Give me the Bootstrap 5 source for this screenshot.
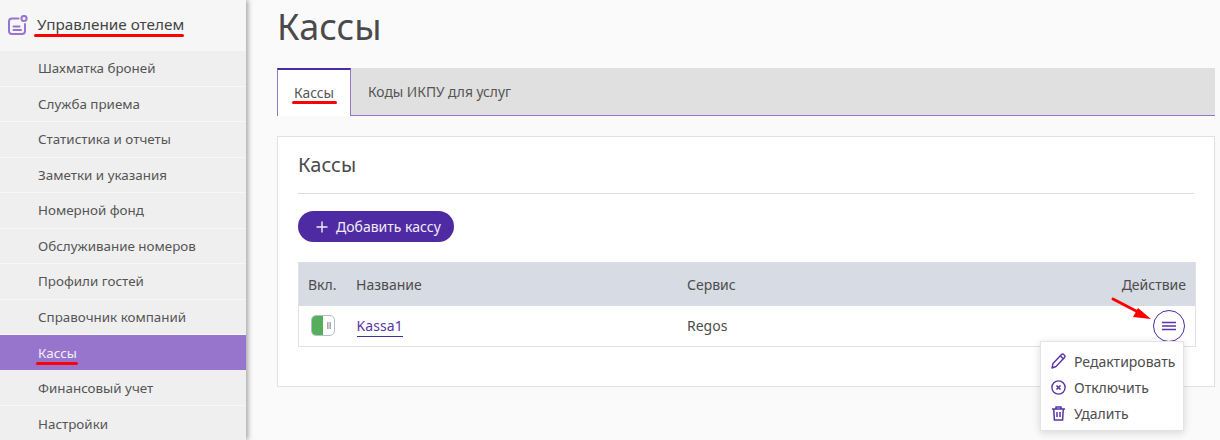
<!DOCTYPE html>
<html lang="ru"><head><meta charset="utf-8"><title>Кассы</title>
<link href="https://cdn.jsdelivr.net/npm/bootstrap@5.3.0/dist/css/bootstrap.min.css" rel="stylesheet">
<style>
html,body{height:440px;overflow:hidden}
body{font-family:"Noto Sans",sans-serif;background:#fafafa;color:#4d4d4d;font-size:14px}
.shell{height:440px;position:relative}
.side{width:246px;flex:none;height:440px;background:#efefef;box-shadow:2px 0 5px rgba(0,0,0,.35);position:relative;z-index:2}
.side-head{height:51px;background:#f6f6f6;padding:0 0 2px 8px;gap:9px;font-size:15.3px;color:#444}
.side-link{display:flex;align-items:center;height:35.5px;padding-left:38px;font-size:13.4px;color:#555;border-bottom:1px solid #f7f7f7;text-decoration:none}
.side-link.on{background:#9775cd;color:#f3eefa;border-bottom:0;height:35px;padding-top:1px}
.side-link.on + .side-link{height:36px;padding-top:1px}
.side-link:last-child{padding-top:1px}
.main-area{width:938px;margin-left:31px}
.page-title{font-size:36px;font-weight:400;color:#4a4a4a;line-height:50px;margin:2px 0 16px}
.tabs-bar{height:48px;background:#e0e0e0;border-bottom:1px solid #9775cd;flex-wrap:nowrap}
.tabs-bar .nav-link{font-size:13.8px;color:#555;height:48px;padding:0 17px;display:flex;align-items:center;border-radius:0}
.tabs-bar .nav-link.active{background:#fff;color:#555;width:74px;padding-left:16px;border-top:2px solid #4f2ba3;border-left:1px solid #9775cd;border-right:1px solid #9775cd;height:48px}
.panel{margin-top:20px;height:251px;background:#fff;border:1px solid #e2e2e2;border-radius:0;padding:0 20px;position:relative}
.panel-title{font-size:20px;font-weight:400;color:#4a4a4a;line-height:28px;margin:14px 0 14px}
.panel-rule{margin:0 0 17px;border-top:1px solid #ddd;opacity:1}
.add-btn{height:31px;width:156px;border-radius:16px;background:#4f2ba3;color:#f1edf9;font-size:14px;padding:0 0 0 18px;border:0;gap:8px;margin-bottom:20px}
.add-btn:hover{background:#4f2ba3;color:#f1edf9}
.pay-table{margin:0;width:898px;table-layout:fixed;border:1px solid #e2e2e2;border-top:0;color:#4d4d4d}
.pay-table th{background:#d7dbe3;font-weight:400;height:44px;padding:0 9px;font-size:14px;vertical-align:middle;border:0;color:#4d4d4d}
.pay-table td{height:40px;padding:0 9px;vertical-align:middle;border:0;font-size:14px;color:#4d4d4d}
.pay-table th:nth-child(2),.pay-table th:nth-child(3),.pay-table td:nth-child(2),.pay-table td:nth-child(3){padding-left:9.5px}
.tog{width:24px;height:21px;border-radius:5px;border:1px solid #b5bccb;background:#fff;display:block;overflow:hidden;position:relative;margin-left:3px}
.tog-fill{display:block;width:12px;height:21px;background:#55ae5c;margin:-1px}
.tog-grip{position:absolute;left:15px;top:6px;width:4px;height:7px;background:#ccc;border-left:1px solid #aaa;border-right:1px solid #aaa}
.kassa{color:#5a34a8;text-decoration:none;border-bottom:1px solid #4f2ba3;padding-bottom:1px;margin-left:.5px;letter-spacing:.1px}
.round-btn{width:32px;height:32px;border-radius:50%;border:1px solid #4f2ba3;background:#fff;padding:0;position:absolute;left:875px;top:173px;z-index:3}
.act-menu{display:block;position:absolute;left:762px;top:204px;width:144px;height:90px;min-width:0;margin:0;padding:6px 0;border:1px solid #e4e4e4;border-radius:0;box-shadow:0 2px 8px rgba(0,0,0,.14);z-index:4}
.act-menu .dropdown-item{height:26px;padding:0 0 0 10px;gap:8px;font-size:14px;color:#4d4d4d;display:flex;align-items:center}
.redline{position:absolute;height:3px;background:#f00;border-radius:2px;z-index:5}
.r1{left:34px;top:34px;width:150px}
.r2{left:36px;top:362px;width:42px}
.r3{left:292px;top:101px;width:45px}
.arrow{position:absolute;left:1108px;top:294px;z-index:5}
</style></head><body>
<div class="shell d-flex">
 <aside class="side">
  <div class="side-head d-flex align-items-center">
   <svg width="20" height="20" viewBox="0 0 20 20" fill="none" stroke="#9775cd" stroke-width="2" stroke-linecap="round"><path d="M10.500 3.500H4a3 3 0 0 0-3 3v9.500a3 3 0 0 0 3 3h10a3 3 0 0 0 3-3V9"/><path d="M5.500 11.500h6M5.500 15h7.500"/><circle cx="16" cy="3.500" r="2.600"/></svg>
   <span>Управление отелем</span>
  </div>
  <a class="side-link">Шахматка броней</a>
  <a class="side-link">Служба приема</a>
  <a class="side-link">Статистика и отчеты</a>
  <a class="side-link">Заметки и указания</a>
  <a class="side-link">Номерной фонд</a>
  <a class="side-link">Обслуживание номеров</a>
  <a class="side-link">Профили гостей</a>
  <a class="side-link">Справочник компаний</a>
  <a class="side-link on">Кассы</a>
  <a class="side-link">Финансовый учет</a>
  <a class="side-link">Настройки</a>
 </aside>
 <main class="main-area">
  <h1 class="page-title">Кассы</h1>
  <ul class="nav tabs-bar">
   <li class="nav-item"><a class="nav-link active">Кассы</a></li>
   <li class="nav-item"><a class="nav-link">Коды ИКПУ для услуг</a></li>
  </ul>
  <section class="panel">
   <h2 class="panel-title">Кассы</h2>
   <hr class="panel-rule">
   <button class="btn add-btn d-flex align-items-center"><svg width="12" height="12" viewBox="0 0 12 12" stroke="#f1edf9" stroke-width="1.4"><path d="M6 .5v11M.5 6h11"/></svg><span>Добавить кассу</span></button>
   <table class="table pay-table">
    <colgroup><col style="width:48px"><col style="width:331px"><col style="width:259px"><col></colgroup>
    <thead><tr><th>Вкл.</th><th>Название</th><th>Сервис</th><th class="text-end">Действие</th></tr></thead>
    <tbody><tr><td><span class="tog"><span class="tog-fill"></span><span class="tog-grip"></span></span></td><td><a class="kassa">Kassa1</a></td><td>Regos</td><td></td></tr></tbody>
   </table>
   <button class="btn round-btn d-flex align-items-center justify-content-center" aria-label="Меню"><svg width="14" height="10" viewBox="0 0 14 10" stroke="#5a34a8" stroke-width="1.7"><path d="M0 1.500h14M0 5h14M0 8.500h14"/></svg></button>
   <ul class="dropdown-menu act-menu">
    <li><a class="dropdown-item"><svg width="15" height="16" viewBox="0 0 15 16" fill="none" stroke="#5a34a8" stroke-width="1.400" stroke-linejoin="round"><path d="M1 15l1-4.500L10.500 1.500a1.500 1.500 0 0 1 2.200 0l.8.8a1.500 1.500 0 0 1 0 2.200L5 13.500z"/><path d="M9.500 3l3 3"/></svg>Редактировать</a></li>
    <li><a class="dropdown-item"><svg width="15" height="15" viewBox="0 0 15 15" fill="none" stroke="#5a34a8" stroke-width="1.400"><circle cx="7.500" cy="7.500" r="6.600"/><path d="M5.500 5.500l4 4M9.500 5.500l-4 4" stroke-width="1.700"/></svg>Отключить</a></li>
    <li><a class="dropdown-item"><svg width="15" height="15" viewBox="0 0 15 15" fill="none" stroke="#5a34a8" stroke-width="1.500"><path d="M1 3h13M5 3V1h5v2M2.700 3l.7 11h8.200l.7-11M6 6v5M9 6v5"/></svg>Удалить</a></li>
   </ul>
  </section>
 </main>
 <span class="redline r1"></span><span class="redline r2"></span><span class="redline r3"></span>
 <svg class="arrow" width="46" height="30" viewBox="0 0 46 30"><path d="M5 5L30 18" stroke="#f00" stroke-width="3" stroke-linecap="round"/><path d="M43 25L25 23L30 14z" fill="#f00"/></svg>
</div>
</body></html>
